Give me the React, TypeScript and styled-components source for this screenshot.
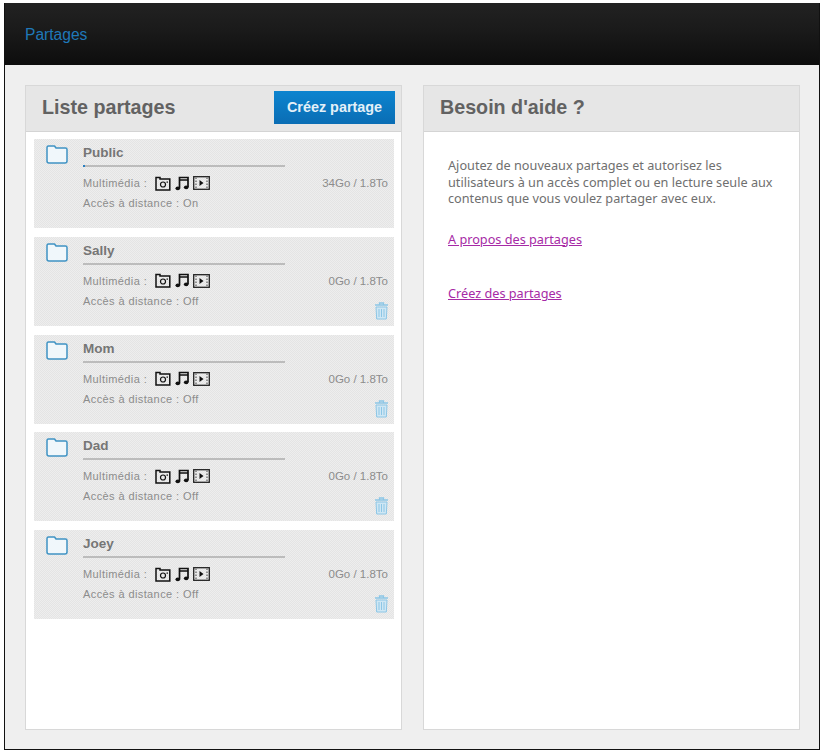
import React from "react";
import styled, { createGlobalStyle } from "styled-components";

const Global = createGlobalStyle`
  html, body { margin: 0; padding: 0; background: #fff; }
  body { font-family: "Liberation Sans", Arial, sans-serif; }
`;

const Frame = styled.div`
  box-sizing: border-box;
  width: 816px;
  height: 747px;
  margin: 3px 0 0 4px;
  border: 1px solid #111;
  border-top: 0;
  background: #efefef;
  display: flex;
  flex-direction: column;
`;

const TopBar = styled.header`
  height: 62px;
  flex: none;
  box-sizing: border-box;
  padding: 1px 0 0 20px;
  display: flex;
  align-items: center;
  background: linear-gradient(#222 0%, #1a1a1a 45%, #0d0d0d 100%);
  color: #1f78b8;
  font-size: 15.6px;
`;

const Columns = styled.main`
  flex: 1;
  display: grid;
  grid-template-columns: 377px 377px;
  gap: 21px;
  padding: 20px 0 19px 20px;
  min-height: 0;
`;

const Panel = styled.section`
  box-sizing: border-box;
  background: #fff;
  border: 1px solid #d8d8d8;
  display: flex;
  flex-direction: column;
`;

const PanelHead = styled.div`
  box-sizing: border-box;
  height: 46px;
  flex: none;
  background: #e6e6e6;
  border-bottom: 1px solid #d4d4d4;
  display: flex;
  align-items: center;
  justify-content: space-between;
  padding: 0 6px 0 16px;
`;

const PanelTitle = styled.h2`
  margin: 0 0 2px;
  font-size: 19.7px;
  font-weight: 700;
  color: #626262;
`;

const CreateButton = styled.button`
  width: 121px;
  height: 33px;
  border: 0;
  padding: 0;
  margin-bottom: 3px;
  background: linear-gradient(#0d84cf, #0a6db4);
  color: #e4f0f8;
  font: 700 14.400px "Liberation Sans", Arial, sans-serif;
`;

const ShareList = styled.div`
  display: flex;
  flex-direction: column;
  gap: 8.750px;
  padding: 7px 7px 0 8px;
`;

const ShareRow = styled.article`
  box-sizing: border-box;
  height: 89px;
  display: grid;
  grid-template-columns: 37px 1fr;
  padding: 6px 6px 0 12px;
  background-color: #e9e9e9;
  background-image: repeating-conic-gradient(#e4e4e4 0 25%, #eeeeee 0 50%);
  background-size: 2px 2px;
`;

const FolderBox = styled.div`
  padding-top: 0;
`;

const ShareBody = styled.div`
  display: flex;
  flex-direction: column;
  min-width: 0;
`;

const ShareName = styled.div`
  font-size: 13.500px;
  font-weight: 700;
  line-height: 15px;
  color: #767676;
  margin-bottom: 5px;
`;

const Usage = styled.div`
  width: 202px;
  height: 2px;
  background: #bcbcbc;
  margin-bottom: 6px;
`;

const UsageFill = styled.div`
  height: 100%;
  background: #2a7fc0;
`;

const MetaLine = styled.div`
  display: flex;
  align-items: center;
  height: 20px;
  font-size: 11px;
  letter-spacing: 0.400px;
  color: #8c8c8c;
`;

const MetaLabel = styled.span`
  width: 72px;
  flex: none;
`;

const MediaIcons = styled.div`
  display: flex;
  align-items: center;
  gap: 4px;
  color: #111;
`;

const Capacity = styled.span`
  margin-left: auto;
  font-size: 11.500px;
  letter-spacing: 0;
  color: #8c8c8c;
`;

const AccessLine = styled.div`
  font-size: 11px;
  letter-spacing: 0.400px;
  line-height: 14px;
  margin-top: 3px;
  color: #8c8c8c;
`;

const TrashSlot = styled.div`
  display: flex;
  justify-content: flex-end;
  margin-top: -6px;
  margin-right: -1px;
`;

const HelpBody = styled.div`
  padding: 25px 25px 0 24px;
  font-family: "Noto Sans", "Liberation Sans", sans-serif;
  font-size: 12.700px;
  line-height: 16.500px;
  color: #6f6f6f;
`;

const HelpText = styled.p`
  margin: 0 0 24px;
`;

const HelpLink = styled.a`
  display: block;
  color: #a62aa6;
  text-decoration: underline;
  margin-bottom: 38px;
`;

const FolderIcon = () => (
  <svg width="22" height="19" viewBox="0 0 22 19" fill="none">
    <path d="M1 4.500V2.500a1.500 1.500 0 0 1 1.500-1.500h6l1.500 2h9.500a1.500 1.500 0 0 1 1.500 1.500v11.500a2 2 0 0 1-2 2H3a2 2 0 0 1-2-2z" fill="#f0f7fb" stroke="#3f93c4" strokeWidth="1.500" strokeLinejoin="round" />
  </svg>
);

const CameraIcon = () => (
  <svg width="16" height="15" viewBox="0 0 16 15" fill="none">
    <path d="M1 4V1.500h4V3h9.800v11H1z" stroke="#111" strokeWidth="1.500" />
    <circle cx="8" cy="8.500" r="2.500" stroke="#111" strokeWidth="1.200" />
    <rect x="11.500" y="5.500" width="1.500" height="1.200" fill="#111" />
  </svg>
);

const MusicIcon = () => (
  <svg width="14" height="15" viewBox="0 0 14 15" fill="none">
    <path d="M4.500 12V1.500h8.500V11" stroke="#111" strokeWidth="1.700" />
    <path d="M4.500 4h8.500" stroke="#111" strokeWidth="1.500" />
    <ellipse cx="2.800" cy="12.300" rx="2.300" ry="1.900" fill="#111" />
    <ellipse cx="11.200" cy="11.300" rx="2.300" ry="1.900" fill="#111" />
  </svg>
);

const FilmIcon = () => (
  <svg width="17" height="14" viewBox="0 0 17 14" fill="none">
    <rect x="0.700" y="0.700" width="15.600" height="12.600" stroke="#222" strokeWidth="1.300" />
    <path d="M6.500 4l4 3-4 3z" fill="#111" />
    <path d="M3 1.500v11M14 1.500v11" stroke="#777" strokeWidth="1.500" strokeDasharray="1.500 1.500" />
  </svg>
);

const TrashIcon = () => (
  <svg width="15" height="18" viewBox="0 0 15 18" fill="none">
    <path d="M5.500 2.500V1h4v1.500M1 3h13" stroke="#8cc6e6" strokeWidth="1.300" />
    <path d="M2 5h11l-.7 12H2.700z" fill="#cfe7f4" stroke="#8cc6e6" strokeWidth="1" />
    <path d="M5 7v8M7.500 7v8M10 7v8" stroke="#8cc6e6" strokeWidth="1" />
  </svg>
);

type Share = { name: string; used: string; access: string; fill: number; removable: boolean };

const shares: Share[] = [
  { name: "Public", used: "34Go / 1.8To", access: "On", fill: 2, removable: false },
  { name: "Sally", used: "0Go / 1.8To", access: "Off", fill: 0, removable: true },
  { name: "Mom", used: "0Go / 1.8To", access: "Off", fill: 0, removable: true },
  { name: "Dad", used: "0Go / 1.8To", access: "Off", fill: 0, removable: true },
  { name: "Joey", used: "0Go / 1.8To", access: "Off", fill: 0, removable: true },
];

export default function App() {
  return (
    <>
      <Global />
      <Frame>
        <TopBar>Partages</TopBar>
        <Columns>
          <Panel>
            <PanelHead>
              <PanelTitle>Liste partages</PanelTitle>
              <CreateButton>Créez partage</CreateButton>
            </PanelHead>
            <ShareList>
              {shares.map((s) => (
                <ShareRow key={s.name}>
                  <FolderBox>
                    <FolderIcon />
                  </FolderBox>
                  <ShareBody>
                    <ShareName>{s.name}</ShareName>
                    <Usage>
                      <UsageFill style={{ width: `${s.fill}px` }} />
                    </Usage>
                    <MetaLine>
                      <MetaLabel>Multimédia :</MetaLabel>
                      <MediaIcons>
                        <CameraIcon />
                        <MusicIcon />
                        <FilmIcon />
                      </MediaIcons>
                      <Capacity>{s.used}</Capacity>
                    </MetaLine>
                    <AccessLine>Accès à distance : {s.access}</AccessLine>
                    {s.removable && (
                      <TrashSlot>
                        <TrashIcon />
                      </TrashSlot>
                    )}
                  </ShareBody>
                </ShareRow>
              ))}
            </ShareList>
          </Panel>
          <Panel>
            <PanelHead>
              <PanelTitle>Besoin d'aide ?</PanelTitle>
            </PanelHead>
            <HelpBody>
              <HelpText>
                Ajoutez de nouveaux partages et autorisez les utilisateurs à un accès complet ou en lecture seule aux
                contenus que vous voulez partager avec eux.
              </HelpText>
              <HelpLink href="#">A propos des partages</HelpLink>
              <HelpLink href="#">Créez des partages</HelpLink>
            </HelpBody>
          </Panel>
        </Columns>
      </Frame>
    </>
  );
}
